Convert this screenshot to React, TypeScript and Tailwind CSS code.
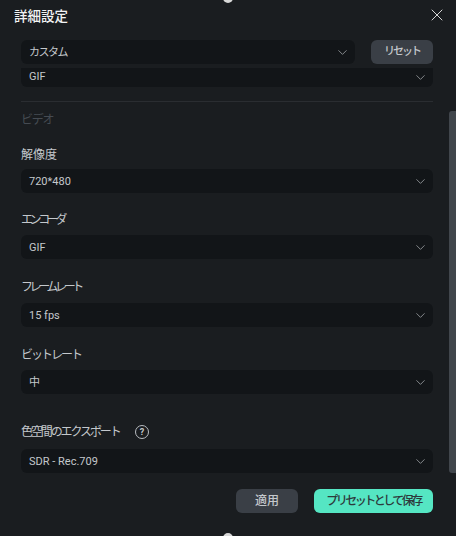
import { ChevronDown, X } from "lucide-react";

function Select({ value, className = "" }: { value: string; className?: string }) {
  return (
    <div
      className={`flex h-6 items-center justify-between rounded-md bg-[#121518] pl-2 pr-[5px] text-[11px] text-[#c4c8cc] ${className}`}
    >
      <span className="pt-[3px]">{value}</span>
      <ChevronDown className="h-[15px] w-[15px] text-[#a8acb0]" strokeWidth={1.2} />
    </div>
  );
}

function Field({ label, value, className, labelClass }: { label: string; value: string; className: string; labelClass: string }) {
  return (
    <div className={className}>
      <div className={`text-xs leading-4 text-[#c4c8cc] ${labelClass}`}>{label}</div>
      <Select value={value} />
    </div>
  );
}

export default function App() {
  return (
    <div className="relative h-[536px] w-[456px] overflow-hidden bg-[#1a1d20] font-['Roboto','Noto_Sans_CJK_JP',sans-serif]">
      {/* window handles */}
      <div className="absolute left-[223px] top-[-7px] h-[10px] w-[10px] rounded-full bg-[#d8d8d8]" />
      <div className="absolute bottom-[-7px] left-[223px] h-[10px] w-[10px] rounded-full bg-[#d8d8d8]" />

      {/* scrollbar */}
      <div className="absolute left-[449px] top-[111px] h-[362px] w-[7px] rounded-l-[3px] bg-[#41464c]" />

      <div className="flex h-[40px] items-start justify-between pl-[14px] pr-[9px] pt-[6px]">
        <h1 className="text-[13.5px] font-medium leading-5 text-[#f2f3f4]">詳細設定</h1>
        <X className="mt-[-1px] h-5 w-5 text-[#e8e8e8]" strokeWidth={1.1} />
      </div>

      <div className="pl-[21px] pr-[23px]">
        <div className="flex gap-4">
          <Select value="カスタム" className="flex-1 tracking-[-1.5px]" />
          <button className="h-6 w-[62px] rounded-md bg-[#3a3f46] text-[11px] font-medium tracking-[-2px] text-[#c4c8cc]">
            リセット
          </button>
        </div>

        <div className="mt-1 flex h-[19px] items-center justify-between rounded-b-md bg-[#121518] pl-2 pr-[5px] text-[11px] text-[#c4c8cc]">
          <span>GIF</span>
          <ChevronDown className="h-[15px] w-[15px] text-[#a8acb0]" strokeWidth={1.2} />
        </div>

        <div className="mt-[14px] h-px bg-[#2a2d31]" />

        <div className="mt-[10px] text-xs leading-4 tracking-[-1.3px] text-[#454b52]">ビデオ</div>

        <Field label="解像度" value="720*480" className="mt-[19px]" labelClass="mb-1.5" />
        <Field label="エンコーダ" value="GIF" className="mt-[19px]" labelClass="mb-[7px] tracking-[-3.4px]" />
        <Field label="フレームレート" value="15 fps" className="mt-5" labelClass="mb-2 tracking-[-3.4px]" />
        <Field label="ビットレート" value="中" className="mt-5" labelClass="mb-[7px] tracking-[-2px]" />

        <div className="mt-[30px]">
          <div className="mb-[9px] flex h-4 items-center text-xs text-[#c4c8cc]">
            <span className="w-[99px] whitespace-nowrap tracking-[-2.1px]">色空間のエクスポート</span>
            <span className="ml-[15px] flex h-[14px] w-[14px] items-center justify-center rounded-full border-[1.5px] border-[#b8bcc0] text-[9px] font-bold leading-none text-[#c4c8cc]">
              ?
            </span>
          </div>
          <Select value="SDR - Rec.709" />
        </div>

        <div className="mt-4 flex justify-end gap-4">
          <button className="h-6 w-[62px] rounded-md bg-[#3a3f46] text-xs font-medium text-[#c4c8cc]">
            適用
          </button>
          <button className="h-6 w-[119px] rounded-md bg-[#55e6c3] text-xs font-medium tracking-[-2.5px] text-[#2d3a3c]">
            プリセットとして保存
          </button>
        </div>
      </div>
    </div>
  );
}
